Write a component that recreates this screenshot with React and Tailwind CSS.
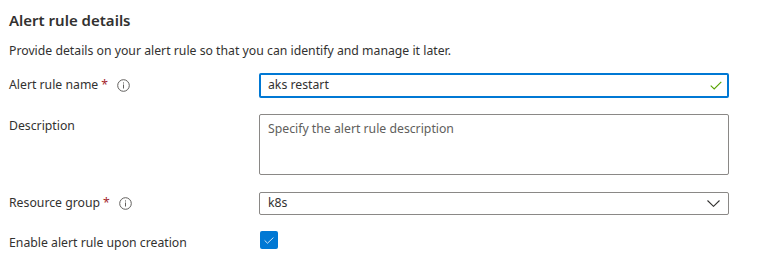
import React from 'react';

const InfoIcon = () => (
  <svg width="13" height="13" viewBox="0 0 13 13" className="ml-[9px]" fill="none">
    <circle cx="6.5" cy="6.5" r="5.8" stroke="#605e5c" strokeWidth="1" />
    <rect x="6" y="5.5" width="1" height="4" fill="#605e5c" />
    <rect x="6" y="3.4" width="1" height="1.1" fill="#605e5c" />
  </svg>
);

const Label = ({ children, required, info, className = '' }) => (
  <div className={`w-[250px] shrink-0 flex items-center text-[12.25px] text-[#323130] ${className}`}>
    <span>{children}</span>
    {required && <span className="text-[#a4262c] ml-[3px]">*</span>}
    {info && <InfoIcon />}
  </div>
);

export default function App() {
  return (
    <div
      className="w-[764px] h-[268px] bg-white px-[9px] pt-[8px] text-[#323130]"
      style={{ fontFamily: '"Noto Sans", "Open Sans", sans-serif' }}
    >
      <div className="text-[15px] font-semibold leading-[24px]">Alert rule details</div>
      <div className="mt-[9px] text-[12.25px] leading-[20px]">
        Provide details on your alert rule so that you can identify and manage it later.
      </div>

      {/* Alert rule name */}
      <div className="mt-[12px] flex items-center">
        <Label required info>Alert rule name</Label>
        <div className="w-[470px] h-[25px] border-2 border-[#0078d4] rounded-[2px] flex items-center justify-between pl-[7px] pr-[5px]">
          <span className="text-[12.25px] leading-none">aks restart</span>
          <svg width="12" height="9" viewBox="0 0 12 9" fill="none">
            <path d="M0.7 4.6 L4.2 8 L11.3 0.8" stroke="#57a300" strokeWidth="1.1" />
          </svg>
        </div>
      </div>

      {/* Description */}
      <div className="mt-[16px] flex items-start">
        <Label className="h-[24px] leading-[24px]">Description</Label>
        <div className="w-[470px] h-[61px] border border-[#8a8886] rounded-[2px] px-[8px] leading-[24px]">
          <span className="text-[12.25px] text-[#605e5c]">Specify the alert rule description</span>
        </div>
      </div>

      {/* Resource group */}
      <div className="mt-[17px] flex items-center">
        <Label required info>Resource group</Label>
        <div className="w-[470px] h-[23px] border border-[#8a8886] rounded-[2px] flex items-center justify-between pl-[8px] pr-[8px]">
          <span className="text-[12.25px] leading-none">k8s</span>
          <svg width="13" height="7" viewBox="0 0 13 7" fill="none">
            <path d="M0.5 0.5 L6.5 6.3 L12.5 0.5" stroke="#323130" strokeWidth="1.1" />
          </svg>
        </div>
      </div>

      {/* Enable */}
      <div className="mt-[16px] flex items-center">
        <Label className="h-[18px] translate-y-[3px]">Enable alert rule upon creation</Label>
        <div className="w-[18px] h-[18px] ml-[1px] bg-[#0078d4] rounded-[2px] flex items-center justify-center">
          <svg width="10" height="7" viewBox="0 0 10 7" fill="none">
            <path d="M0.6 3.4 L3.5 6.2 L9.4 0.6" stroke="#ffffff" strokeWidth="0.8" />
          </svg>
        </div>
      </div>
    </div>
  );
}
